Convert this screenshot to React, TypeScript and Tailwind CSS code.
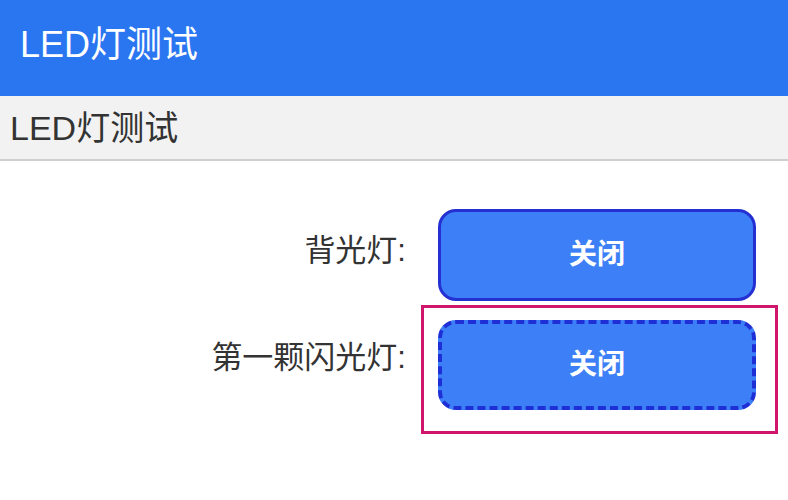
export default function App() {
  const font = "font-['Liberation_Sans','Noto_Sans_CJK_SC',sans-serif]";
  return (
    <div className={`w-[788px] h-[500px] bg-white overflow-hidden ${font}`}>
      {/* App bar */}
      <div className="h-[96px] bg-[#2a76f1] flex items-center pl-[20px] pb-[6px]">
        <span className="text-[36px] text-white leading-none">LED灯测试</span>
      </div>

      {/* Section title */}
      <div className="h-[65px] bg-[#f2f2f2] border-b-2 border-[#cfcfcf] flex items-center pl-[10px]">
        <span className="text-[34px] text-[#333333] leading-none">LED灯测试</span>
      </div>

      {/* Rows */}
      <div className="pt-[48px] flex flex-col gap-[4px]">
        <div className="flex items-center">
          <div className="w-[406px] text-right text-[31px] text-[#333333] leading-none pb-[10px]">
            背光灯:
          </div>
          <div className="pl-[32px]">
            <button className="w-[318px] h-[92px] rounded-[18px] bg-[#3d7ff7] border-[3px] border-[#2530d2] text-white text-[28px] font-bold">
              关闭
            </button>
          </div>
        </div>

        <div className="flex items-center">
          <div className="w-[406px] text-right text-[31px] text-[#333333] leading-none pb-[24px]">
            第一颗闪光灯:
          </div>
          <div className="ml-[15px] w-[357px] h-[129px] border-[3px] border-[#d0166c] pl-[14px] pt-[12px]">
            <button className="w-[318px] h-[90px] rounded-[18px] bg-[#3d7ff7] border-[4px] border-dashed border-[#1f2fd6] text-white text-[28px] font-bold">
              关闭
            </button>
          </div>
        </div>
      </div>
    </div>
  );
}
